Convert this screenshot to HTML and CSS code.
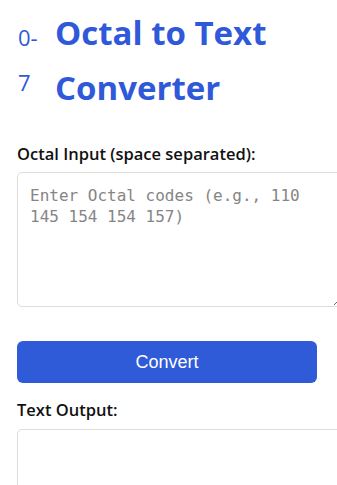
FILE: index.html
```html
<!DOCTYPE html>
<html lang="en">
  <head>
    <meta charset="UTF-8" />
    <meta name="viewport" content="width=device-width, initial-scale=1.0" />
    <title>Octal to Text Converter</title>
    <link rel="stylesheet" href="styles.css">
  </head>
  <body>
    <div class="converter">
      <h1 class="title">
        <span class="title-icon">0-7</span>
        <span class="title-text">Octal to Text Converter</span>
      </h1>

      <label class="field-label" for="octalInput">Octal Input (space separated):</label>
      <textarea
        id="octalInput"
        class="field"
        placeholder="Enter Octal codes (e.g., 110 145 154 154 157)"
      ></textarea>

      <button class="convert-btn" onclick="convert()">Convert</button>

      <label class="field-label output-label" for="textOutput">Text Output:</label>
      <textarea id="textOutput" class="field" readonly></textarea>
    </div>

    <script>
      function convert() {
        const input = document.getElementById("octalInput").value.trim();
        const output = document.getElementById("textOutput");
        if (!input) {
          output.value = "";
          return;
        }
        output.value = input
          .split(/\s+/)
          .map((code) => String.fromCharCode(parseInt(code, 8)))
          .join("");
      }
    </script>
  </body>
</html>
```

FILE: styles.css
```css
body {
  margin: 0;
  padding: 0 17px;
  font-family: "Open Sans", "Noto Sans", sans-serif;
  background: #fff;
  color: #111;
  overflow-x: hidden;
}

.converter {
  width: 300px;
}

.title {
  display: flex;
  align-items: flex-start;
  gap: 13px;
  margin: 5px 0 27px;
  color: #3059da;
}

.title-icon {
  width: 24px;
  flex-shrink: 0;
  font-size: 22px;
  font-weight: 400;
  line-height: 45px;
  padding-top: 10px;
  padding-left: 1px;
}

.title-text {
  font-size: 33px;
  font-weight: 700;
  line-height: 55px;
}

.field-label {
  display: block;
  font-size: 16.5px;
  font-weight: 600;
  line-height: 24px;
  margin-bottom: 6px;
}

.output-label {
  margin-top: 15px;
  margin-bottom: 7px;
}

.field {
  display: block;
  width: 100%;
  height: 109px;
  padding: 12px;
  margin: 0;
  border: 1px solid #ddd;
  border-radius: 5px;
  font-family: "DejaVu Sans Mono", "Liberation Mono", monospace;
  font-size: 16px;
  line-height: 21px;
  color: #222;
  background: #fff;
}

.field::placeholder {
  color: #858585;
}

.convert-btn {
  display: block;
  width: 300px;
  height: 42px;
  margin-top: 34px;
  border: none;
  border-radius: 6px;
  background: #2f5ad8;
  color: #fff;
  font-family: "Liberation Sans", Arial, sans-serif;
  font-size: 18px;
  cursor: pointer;
}
```
